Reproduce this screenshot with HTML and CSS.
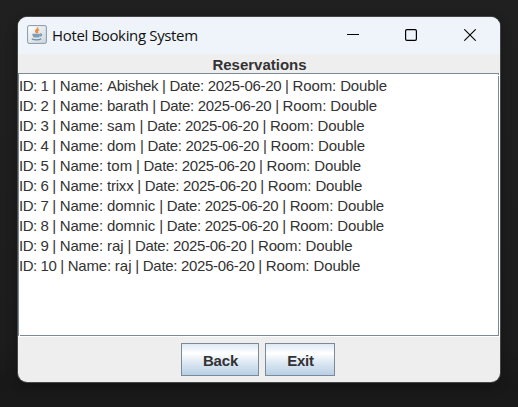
FILE: index.html
```html
<!DOCTYPE html>
<html lang="en">
<head>
<meta charset="utf-8">
<title>Hotel Booking System</title>
<link rel="stylesheet" href="styles.css">
</head>
<body>
<main class="window">
  <header class="titlebar">
    <svg class="app-icon" width="20" height="19" viewBox="0 0 20 19">
      <defs><linearGradient id="tile" x1="0" y1="0" x2="1" y2="1"><stop offset="0" stop-color="#fff"/><stop offset="1" stop-color="#cbd5dd"/></linearGradient></defs>
      <rect x=".6" y=".6" width="18.8" height="17.8" rx="1.5" fill="url(#tile)" stroke="#8798a5"/>
      <path d="M10.600 2.300c1 2-3 2.700-1.800 4.500l1 1.300M12.200 4.600c-2 .7-2.300 1.500-1.300 3.200" fill="none" stroke="#ea8b3c" stroke-width="1.500"/>
      <path d="M5.300 8.700h7.600c0 1.800-.4 3-1.400 3.700H6.900C5.900 11.700 5.400 10.500 5.300 8.700z" fill="#7f9db3"/>
      <path d="M13 9c2.500-.3 2 2-.6 2.200M4.800 13.700c2 1.500 7.500 1.500 9.500 0" fill="none" stroke="#6b8da7" stroke-width="1.200"/>
    </svg>
    <h1 class="title">Hotel Booking System</h1>
    <svg class="control" width="12" height="12" viewBox="0 0 12 12"><path d="M0 5.500h12" stroke="#000"/></svg>
    <svg class="control" width="12" height="12" viewBox="0 0 12 12"><rect x=".6" y=".6" width="10.800" height="10.800" rx="1.300" fill="none" stroke="#000" stroke-width="1.200"/></svg>
    <svg class="control" width="12" height="12" viewBox="0 0 12 12"><path d="M.3.3l11.400 11.400M11.700.3L.3 11.700" stroke="#000" stroke-width="1.100"/></svg>
  </header>
  <h2 class="heading">Reservations</h2>
  <section class="scroll">
    <ul class="list">
      <li><span class="id">ID: 1</span> | <span class="label">Name: </span><span class="snug">Abishek</span> | <span class="date">Date: 2025-06-20</span> | <span class="room">Room: Double</span></li>
      <li><span class="id">ID: 2</span> | <span class="label">Name: </span><span class="close">barath</span> | <span class="date">Date: 2025-06-20</span> | <span class="room">Room: Double</span></li>
      <li><span class="id">ID: 3</span> | <span class="label">Name: </span><span class="wide">sam</span> | <span class="date">Date: 2025-06-20</span> | <span class="room">Room: Double</span></li>
      <li><span class="id">ID: 4</span> | <span class="label">Name: </span><span>dom</span> | <span class="date">Date: 2025-06-20</span> | <span class="room">Room: Double</span></li>
      <li><span class="id">ID: 5</span> | <span class="label">Name: </span><span class="wide">tom</span> | <span class="date">Date: 2025-06-20</span> | <span class="room">Room: Double</span></li>
      <li><span class="id">ID: 6</span> | <span class="label">Name: </span><span class="close">trixx</span> | <span class="date">Date: 2025-06-20</span> | <span class="room">Room: Double</span></li>
      <li><span class="id">ID: 7</span> | <span class="label">Name: </span><span class="name">domnic</span> | <span class="date">Date: 2025-06-20</span> | <span class="room">Room: Double</span></li>
      <li><span class="id">ID: 8</span> | <span class="label">Name: </span><span class="name">domnic</span> | <span class="date">Date: 2025-06-20</span> | <span class="room">Room: Double</span></li>
      <li><span class="id">ID: 9</span> | <span class="label">Name: </span><span class="name">raj</span> | <span class="date">Date: 2025-06-20</span> | <span class="room">Room: Double</span></li>
      <li><span class="id">ID: 10</span> | <span class="label">Name: </span><span class="name">raj</span> | <span class="date">Date: 2025-06-20</span> | <span class="room">Room: Double</span></li>
    </ul>
  </section>
  <footer class="actions">
    <button class="button back">Back</button>
    <button class="button exit">Exit</button>
  </footer>
</main>
</body>
</html>
```
FILE: styles.css
```css
* { box-sizing: border-box; }
body {
  margin: 0;
  height: 407px;
  padding: 17px 18px 25px;
  background: linear-gradient(#202020, #1c1c1c 85%, #181818 95%, #1a1a1a);
  font-family: "Liberation Sans", Arial, sans-serif;
  color: #333;
  overflow: hidden;
}
.window {
  display: flex;
  flex-direction: column;
  width: 482px;
  height: 365px;
  border-radius: 9px;
  overflow: hidden;
  background: #eee;
  box-shadow: 0 0 0 1px #444746, 0 3px 12px #0005;
}
.titlebar {
  display: flex;
  align-items: center;
  flex: none;
  height: 37px;
  padding: 0 24px 0 9px;
  background: #eef4f9;
}
.app-icon { margin-top: -2px; }
.title {
  flex: 1;
  margin: -2px 0 0 5px;
  font: 400 15px/20px "Open Sans", "Noto Sans", sans-serif;
  letter-spacing: -0.35px;
  color: #111;
}
.control { margin-left: 46px; margin-top: -1px; }
.control:last-child { margin-left: 47px; }
.heading {
  flex: none;
  height: 19px;
  margin: 0;
  padding-left: 1px;
  font-size: 15px;
  line-height: 22px;
  font-weight: 700;
  text-align: center;
}
.scroll {
  position: relative;
  flex: none;
  height: 264px;
  border-right: 1px solid #fff;
  border-bottom: 1px solid #fff;
}
.scroll::before,
.scroll::after {
  content: "";
  position: absolute;
  width: 1px;
  height: 1px;
  background: #fff;
}
.scroll::before { top: 2px; right: 0; }
.scroll::after { bottom: 0; left: 1px; }
.list {
  height: 263px;
  margin: 0;
  padding: 2px 0 0;
  border: 1px solid #7a8a99;
  background: #fff;
  list-style: none;
  font-size: 15px;
  line-height: 20px;
  letter-spacing: -0.3px;
  white-space: nowrap;
}
.list span { letter-spacing: 0; }
.list .id { letter-spacing: -0.45px; }
.list .label { letter-spacing: -0.2px; }
.list .snug { letter-spacing: -0.3px; }
.list .close { letter-spacing: -0.2px; }
.list .wide { letter-spacing: 0.1px; }
.list .date { letter-spacing: -0.32px; }
.list .room { letter-spacing: -0.12px; }
.actions {
  display: flex;
  justify-content: center;
  gap: 6px;
  padding: 6px 2px 6px 0;
}
.button {
  height: 33px;
  padding: 2px 0 0 1px;
  border: 1px solid #7a8a99;
  background: linear-gradient(#dde8f3, #fff 30%, #dde8f3 60%, #b8cfe5);
  color: #333;
  font: 700 15px/29px "Liberation Sans", Arial, sans-serif;
  letter-spacing: -0.2px;
}
.back { width: 78px; }
.exit { width: 70px; }
```
